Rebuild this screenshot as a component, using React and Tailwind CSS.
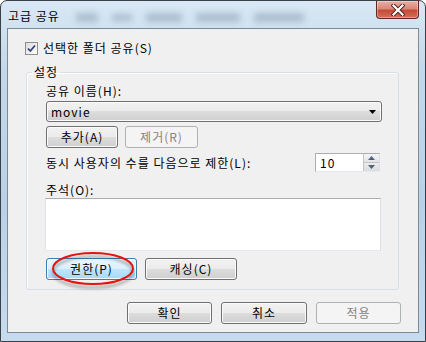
import React from 'react';

// Vista-style button faces
const FACE = 'border border-[#707070] rounded-[3px] bg-[linear-gradient(#f2f2f2_0%,#ebebeb_50%,#dddddd_50%,#cfcfcf_100%)] shadow-[inset_0_0_0_1px_#fbfbfb]';
const BTN = `flex items-center justify-center h-[22px] ${FACE}`;
const BTN_OFF = 'flex items-center justify-center h-[22px] rounded-[3px] border border-[#adb2b5] bg-[#f4f4f4] text-[#838383]';
const BTN_HOT = 'flex items-center justify-center h-[22px] rounded-[3px] border border-[#3c7fb1] bg-[linear-gradient(#eaf6fd_0%,#d9f0fc_50%,#bee6fd_50%,#a7d9f5_100%)] shadow-[inset_0_0_0_1px_#f4fbff]';

const Checkbox = () => (
  <div className="w-[13px] h-[13px] border border-[#8f8f8f] bg-[linear-gradient(135deg,#dcdcdc,#ffffff)] flex items-center justify-center">
    <svg width="11" height="11" viewBox="0 0 11 11">
      <path d="M2 5.5 L4.3 8 L9 2.5" fill="none" stroke="#31417c" strokeWidth="1.8" />
    </svg>
  </div>
);

const CloseButton = () => (
  <div className="absolute right-[6px] top-0 w-[43px] h-[18px] rounded-b-[4px] border border-t-0 border-[#5b2a22] bg-[linear-gradient(#e8b0a4_0%,#d9887a_45%,#c64a37_55%,#d2705c_100%)] flex items-center justify-center shadow-[inset_0_0_0_1px_rgba(255,255,255,0.35)]">
    <svg width="14" height="12" viewBox="0 0 14 12">
      <path d="M2.5 1.5 L11.5 10.5 M11.5 1.5 L2.5 10.5" stroke="#4a1d16" strokeWidth="4" strokeLinecap="square" />
      <path d="M2.5 1.5 L11.5 10.5 M11.5 1.5 L2.5 10.5" stroke="#ffffff" strokeWidth="2.2" strokeLinecap="square" />
    </svg>
  </div>
);

const Spin = () => (
  <div className="w-[65px] h-[19px] flex border border-[#abadb3] border-r-[#dbdfe6] border-b-[#e3e9ef] bg-white">
    <div className="flex-1 pl-[4px] flex items-center">10</div>
    <div className="w-[16px] flex flex-col border-l border-[#c4c4c4]">
      <div className="flex-1 flex items-center justify-center bg-[linear-gradient(#f6f6f6,#e4e4e4)] border-b border-[#c4c4c4]">
        <svg width="7" height="4" viewBox="0 0 7 4"><path d="M0 4 L3.5 0 L7 4 Z" fill="#4d6185" /></svg>
      </div>
      <div className="flex-1 flex items-center justify-center bg-[linear-gradient(#ececec,#dcdcdc)]">
        <svg width="7" height="4" viewBox="0 0 7 4"><path d="M0 0 L3.5 4 L7 0 Z" fill="#4d6185" /></svg>
      </div>
    </div>
  </div>
);

const App = () => {
  return (
    <div className="relative w-[426px] h-[342px] overflow-hidden bg-white font-['Noto_Sans_CJK_KR','Noto_Sans',sans-serif] text-[12px] leading-[14px] tracking-[1px] text-black">
      <div className="w-[426px] h-[342px] rounded-t-[7px] border border-[#3b4046] bg-[linear-gradient(180deg,#d9e8f4_0%,#c3d8ea_20%,#b9d1e7_60%,#c6dbee_100%)] flex flex-col">
        {/* title bar */}
        <div className="relative h-[27px] flex items-center pl-[7px]">
          <span className="mt-[2px] text-black">고급 공유</span>
          <div className="flex items-center gap-[14px] ml-[16px] mt-[6px] blur-[3px] opacity-40">
            <span className="w-[22px] h-[9px] bg-[#6d87a0]" />
            <span className="w-[20px] h-[7px] bg-[#6d87a0]" />
            <span className="w-[36px] h-[9px] bg-[#6d87a0]" />
            <span className="w-[44px] h-[9px] bg-[#6d87a0]" />
            <span className="w-[50px] h-[9px] bg-[#6d87a0]" />
          </div>
          <CloseButton />
        </div>

        {/* client area */}
        <div className="ml-[6px] w-[412px] h-[305px] border border-[#7d8a96] bg-[#f0f0f0] flex flex-col">
          <div className="mt-[12px] ml-[17px] flex items-center gap-[5px]">
            <Checkbox />
            <span>선택한 폴더 공유(S)</span>
          </div>

          <fieldset className="mt-[10px] ml-[18px] w-[373px] border border-[#d5dfe5] rounded-[3px] px-0 pt-0 pb-[9px] shadow-[inset_1px_1px_0_#ffffff]">
            <legend className="ml-[5px] px-[2px] leading-[14px]">설정</legend>
            <div className="ml-[19px] mt-[5px]">공유 이름(H):</div>
            <div className={`ml-[19px] mt-[3px] w-[336px] h-[21px] flex items-center justify-between pl-[4px] pr-[5px] ${FACE}`}>
              <span>movie</span>
              <svg width="7" height="4" viewBox="0 0 7 4"><path d="M0 0 L7 0 L3.5 4 Z" fill="#000" /></svg>
            </div>
            <div className="ml-[19px] mt-[4px] flex gap-[7px]">
              <div className={`${BTN} w-[72px]`}>추가(A)</div>
              <div className={`${BTN_OFF} w-[73px]`}>제거(R)</div>
            </div>
            <div className="ml-[19px] mt-[5px] w-[334px] flex items-center justify-between">
              <span>동시 사용자의 수를 다음으로 제한(L):</span>
              <Spin />
            </div>
            <div className="ml-[19px] mt-[11px]">주석(O):</div>
            <div className="ml-[18px] mt-[1px] w-[336px] h-[53px] bg-white border border-[#abadb3] border-r-[#dbdfe6] border-b-[#e3e9ef] border-l-[#e2e3ea]" />
            <div className="ml-[19px] mt-[7px] flex gap-[8px]">
              <div className={`${BTN_HOT} w-[91px]`}>권한(P)</div>
              <div className={`${BTN} w-[92px]`}>캐싱(C)</div>
            </div>
          </fieldset>

          <div className="mt-[12px] pr-[17px] flex justify-end gap-[9px]">
            <div className={`${BTN} w-[85px]`}>확인</div>
            <div className={`${BTN} w-[86px]`}>취소</div>
            <div className={`${BTN_OFF} w-[85px]`}>적용</div>
          </div>
        </div>
      </div>

      {/* red annotation ellipse */}
      <svg className="absolute left-[48px] top-[248px]" width="92" height="44" viewBox="0 0 92 44">
        <defs>
          <filter id="sh" x="-20%" y="-20%" width="140%" height="160%">
            <feGaussianBlur stdDeviation="1.5" />
          </filter>
        </defs>
        <ellipse cx="45" cy="24" rx="40" ry="15.5" fill="none" stroke="#000" strokeOpacity="0.35" strokeWidth="2" filter="url(#sh)" />
        <ellipse cx="45" cy="20.5" rx="40" ry="15.5" fill="none" stroke="#e5140f" strokeWidth="2" />
      </svg>
    </div>
  );
};

export default App;
